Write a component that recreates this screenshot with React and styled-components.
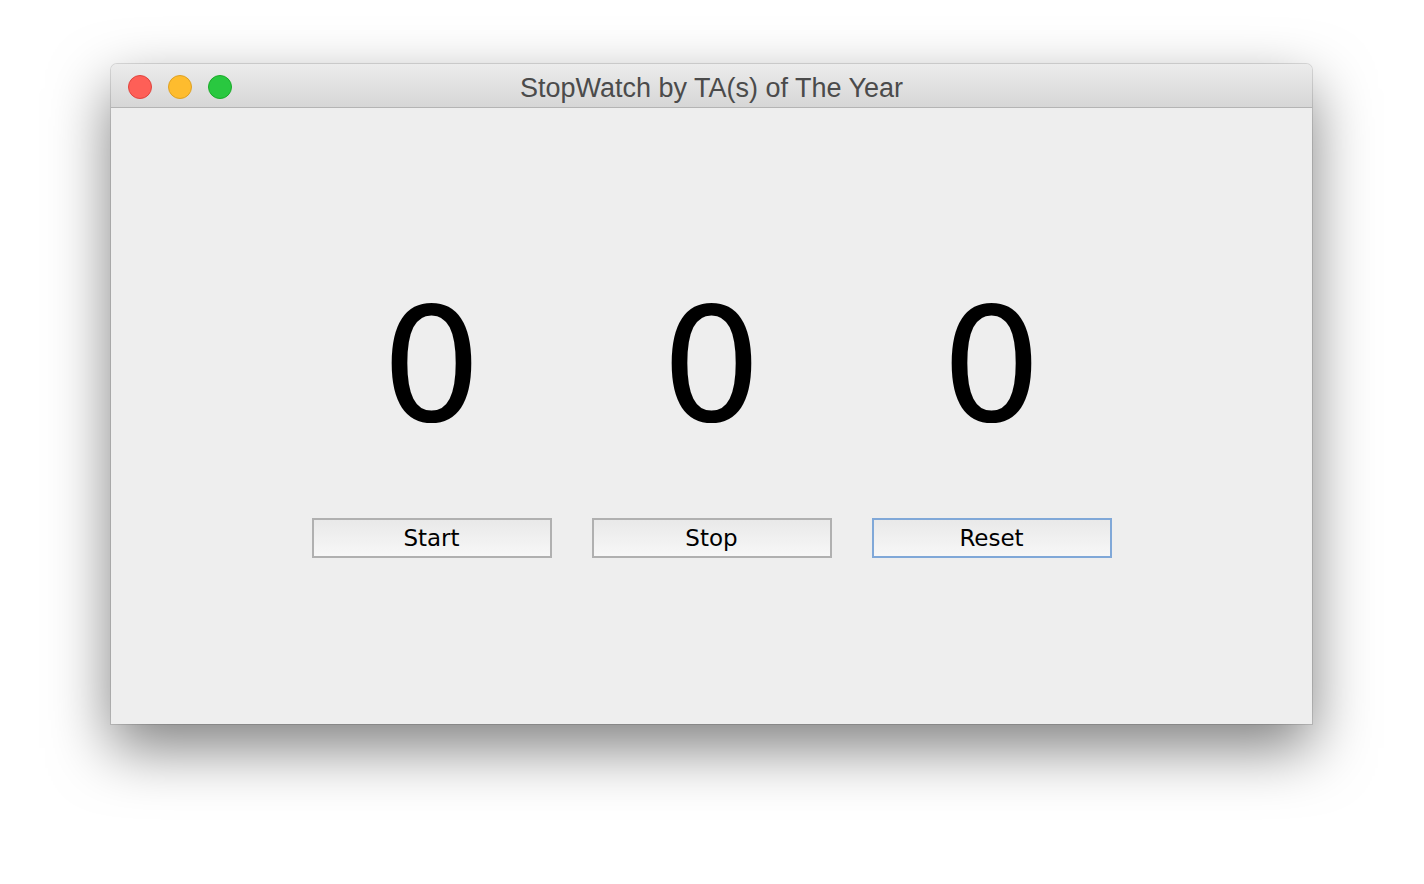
import styled, { createGlobalStyle } from 'styled-components';

const GlobalStyle = createGlobalStyle`
  body {
    margin: 0;
    background: #ffffff;
    font-family: "DejaVu Sans", sans-serif;
  }
`;

const Page = styled.div`
  width: 1424px;
  height: 884px;
  padding: 64px 0 0 111px;
  box-sizing: border-box;
  overflow: hidden;
`;

const Window = styled.div`
  width: 1201px;
  height: 660px;
  display: flex;
  flex-direction: column;
  border-radius: 6px 6px 0 0;
  background: #eeeeee;
  box-shadow: 0 24px 60px rgba(0, 0, 0, 0.5), 0 0 0 1px rgba(0, 0, 0, 0.12);
  overflow: hidden;
`;

const TitleBar = styled.div`
  height: 43px;
  flex-shrink: 0;
  position: relative;
  display: flex;
  align-items: center;
  justify-content: center;
  background: linear-gradient(#ececec, #d6d6d6);
  border-bottom: 1px solid #b4b4b4;
`;

const Lights = styled.div`
  position: absolute;
  left: 17px;
  top: 11px;
  display: flex;
  gap: 16px;
`;

const Light = styled.span`
  width: 22px;
  height: 22px;
  border-radius: 50%;
  background: ${(p) => p.color};
  border: 1px solid ${(p) => p.edge};
`;

const Title = styled.div`
  font-family: "Liberation Sans", Arial, sans-serif;
  font-size: 27px;
  color: #4b4b4b;
  padding-top: 5px;
`;

const Body = styled.div`
  flex: 1;
  display: flex;
  flex-direction: column;
  align-items: center;
  padding-top: 179px;
`;

const Row = styled.div`
  display: grid;
  grid-template-columns: repeat(3, 240px);
  column-gap: 40px;
`;

const Digit = styled.div`
  font-family: "DejaVu Sans", sans-serif;
  font-size: 158px;
  line-height: 158px;
  height: 158px;
  text-align: center;
  color: #000;
`;

const Buttons = styled(Row)`
  margin-top: 73px;
`;

const Button = styled.button`
  height: 40px;
  box-sizing: border-box;
  border: 2px solid ${(p) => (p.focused ? '#80a8d8' : '#b0b0b0')};
  background: linear-gradient(#e9e9e9, #f7f7f7);
  font-family: "DejaVu Sans", sans-serif;
  font-size: 23px;
  color: #000;
  padding: 0;
  cursor: pointer;
`;

export default function App() {
  return (
    <>
      <GlobalStyle />
      <Page>
        <Window>
          <TitleBar>
            <Lights>
              <Light color="#fe5f57" edge="#e0443e" />
              <Light color="#febc2e" edge="#dea123" />
              <Light color="#29c840" edge="#1aab29" />
            </Lights>
            <Title>StopWatch by TA(s) of The Year</Title>
          </TitleBar>
          <Body>
            <Row>
              <Digit>0</Digit>
              <Digit>0</Digit>
              <Digit>0</Digit>
            </Row>
            <Buttons>
              <Button>Start</Button>
              <Button>Stop</Button>
              <Button focused>Reset</Button>
            </Buttons>
          </Body>
        </Window>
      </Page>
    </>
  );
}
